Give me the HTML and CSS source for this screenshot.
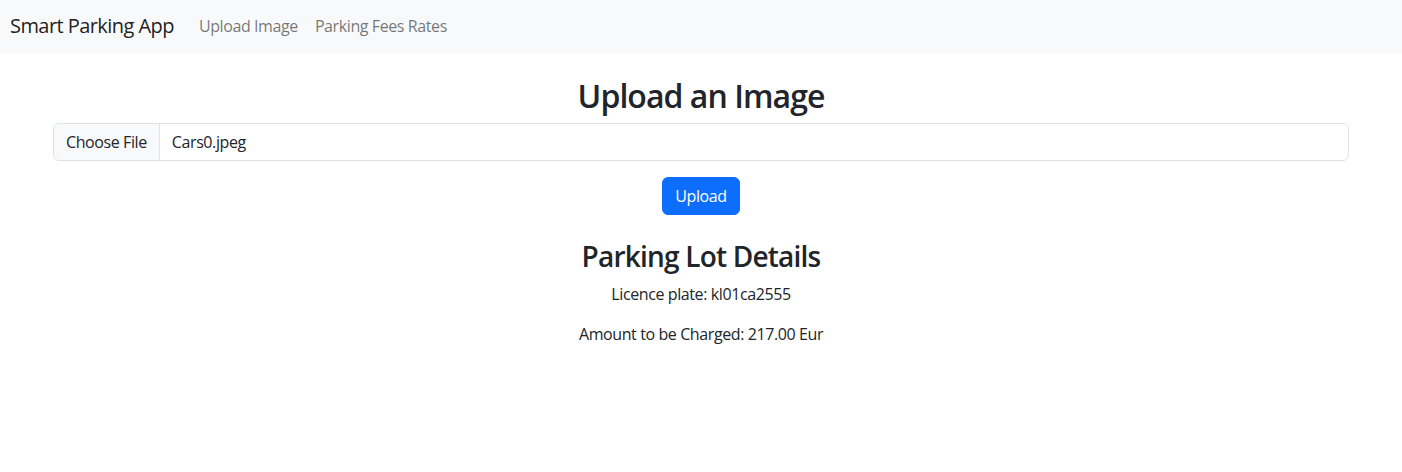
FILE: index.html
```html
<!DOCTYPE html>
<html lang="en">
<head>
<meta charset="utf-8">
<title>Smart Parking App</title>
<link rel="stylesheet" href="styles.css">
</head>
<body>
<nav class="navbar">
  <a class="brand" href="#">Smart Parking App</a>
  <ul class="nav">
    <li><a class="nav-link" href="#">Upload Image</a></li>
    <li><a class="nav-link" href="#">Parking Fees Rates</a></li>
  </ul>
</nav>
<main class="container">
  <h2 class="title">Upload an Image</h2>
  <form class="upload-form">
    <div class="file-input">
      <span class="file-btn">Choose File</span>
      <span class="file-name">Cars0.jpeg</span>
    </div>
    <button type="button" class="btn-primary">Upload</button>
  </form>
  <section class="details">
    <h3 class="subtitle">Parking Lot Details</h3>
    <p>Licence plate: kl01ca2555</p>
    <p>Amount to be Charged: 217.00 Eur</p>
  </section>
</main>
</body>
</html>
```

FILE: styles.css
```css
* { box-sizing: border-box; }
html, body {
  margin: 0;
  padding: 0;
  background: #fff;
}
body {
  font-family: "Open Sans", "Noto Sans", sans-serif;
  font-size: 16px;
  line-height: 1.5;
  letter-spacing: -0.025em;
  color: #212529;
}
a { text-decoration: none; }
.navbar {
  display: flex;
  align-items: center;
  height: 53px;
  padding: 0 10px 1px;
  background: #f8f9fa;
}
.brand {
  font-size: 20px;
  letter-spacing: -0.028em;
  color: rgba(0, 0, 0, 0.9);
  margin-right: 25px;
}
.nav {
  display: flex;
  list-style: none;
  margin: 0;
  padding: 0;
  gap: 17px;
}
.nav-link {
  color: rgba(0, 0, 0, 0.55);
  font-size: 16px;
}
.container {
  width: 1296px;
  margin: 0 auto;
  padding-top: 24px;
  text-align: center;
}
.title {
  margin: 0 0 8px;
  font-size: 32px;
  font-weight: 600;
  line-height: 1.2;
  letter-spacing: -0.03em;
}
.upload-form {
  display: flex;
  flex-direction: column;
  align-items: center;
  gap: 16px;
}
.file-input {
  display: flex;
  width: 100%;
  height: 38px;
  border: 1px solid #dee2e6;
  border-radius: 6px;
  overflow: hidden;
  text-align: left;
}
.file-btn {
  display: flex;
  align-items: center;
  padding: 0 12px;
  background: #f8f9fa;
  border-right: 1px solid #dee2e6;
}
.file-name {
  display: flex;
  align-items: center;
  padding: 0 12px;
}
.btn-primary {
  height: 38px;
  padding: 0 12px;
  border: 1px solid #0d6efd;
  border-radius: 6px;
  background: #0d6efd;
  color: #fff;
  font: inherit;
  letter-spacing: inherit;
}
.details {
  margin-top: 25px;
}
.subtitle {
  margin: 0 0 8px;
  font-size: 28px;
  font-weight: 600;
  line-height: 1.2;
  letter-spacing: -0.028em;
}
.details p {
  margin: 0 0 16px;
}
```
